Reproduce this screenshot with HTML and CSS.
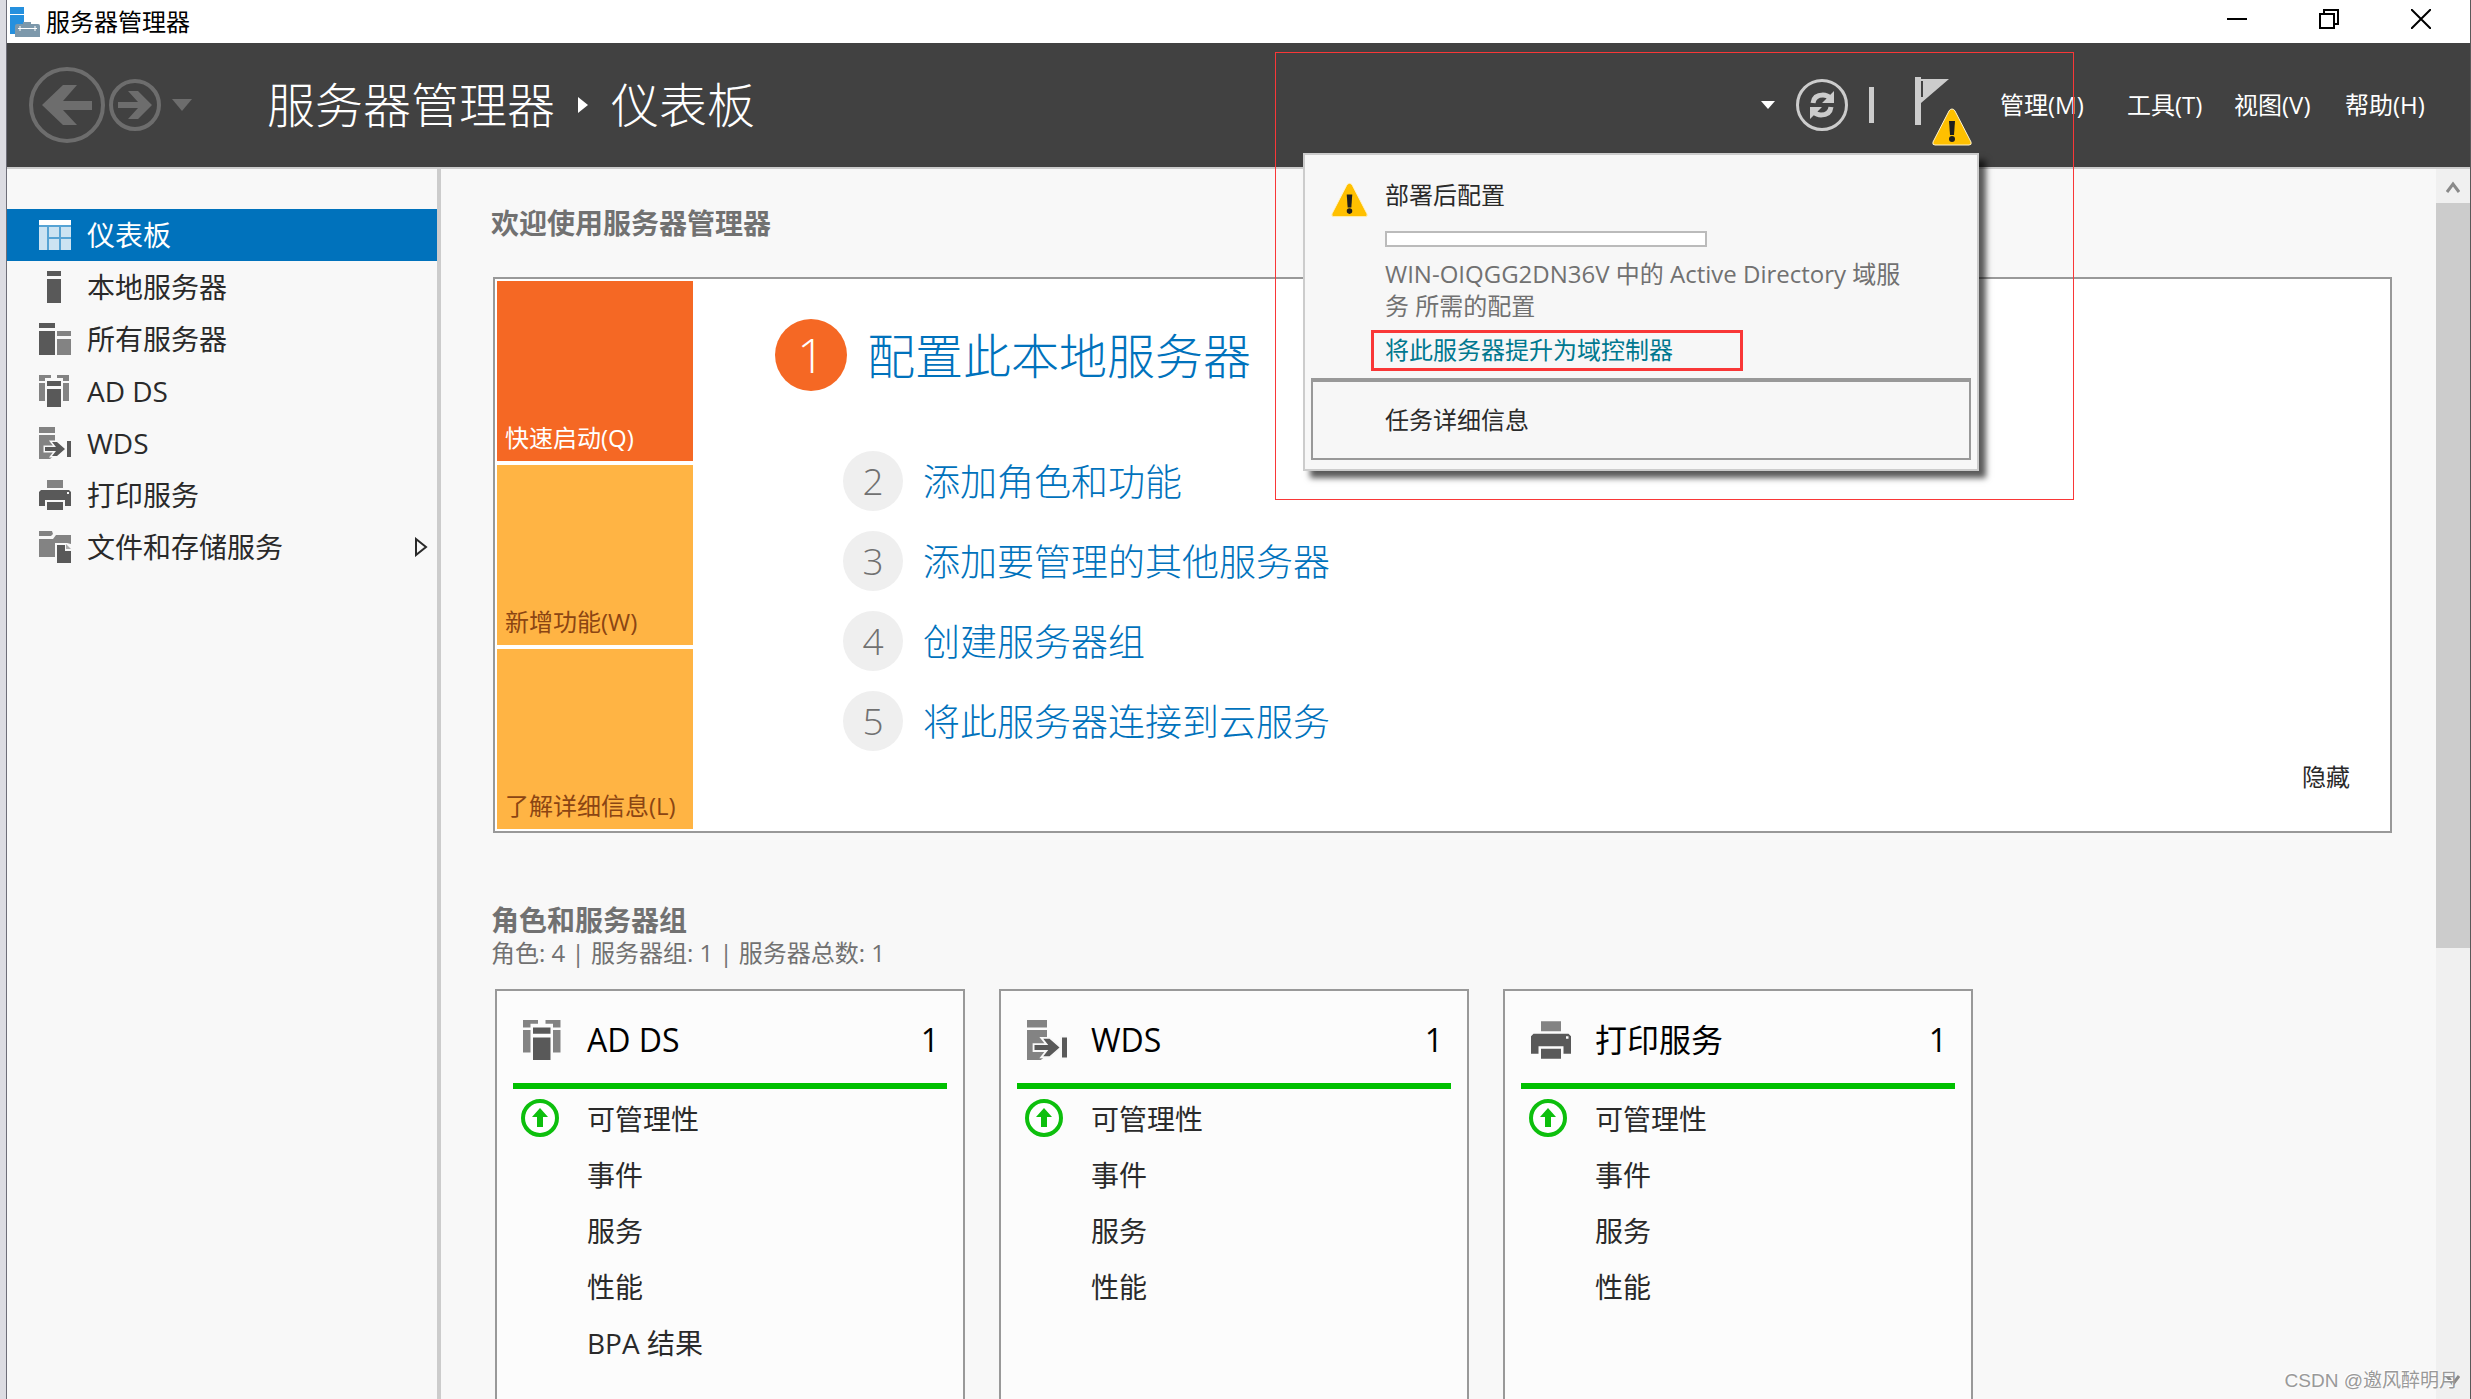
FILE: index.html
```html
<!DOCTYPE html>
<html lang="zh-CN">
<head>
<meta charset="utf-8">
<title>服务器管理器</title>
<link rel="stylesheet" href="styles.css">
</head>
<body>
<svg class="defs" aria-hidden="true">
  <symbol id="i-adds" viewBox="0 0 32 32">
    <path fill="#838383" d="M0 0h12v3H6v3H0zM18 0h12v6h-6V3h-6zM0 8h6v18H0zM24 8h6v18h-6z"/>
    <path fill="#595959" d="M8 6h14v5H8zM8 14h14v18H8z"/>
  </symbol>
  <symbol id="i-wds" viewBox="0 0 32 32">
    <path fill="#838383" d="M0 0h16v6H0zM0 8h16v20l-5 4H0z"/>
    <path fill="#595959" stroke="#f8f8f8" stroke-width="3" paint-order="stroke" d="M6 20h11l-4-5h5l8 7-8 7h-5l4-5H6zM28 14h5v16h-5z"/>
  </symbol>
  <symbol id="i-print" viewBox="0 0 32 32">
    <path fill="#838383" d="M8 1h16v8H8z"/>
    <path fill="#595959" fill-rule="evenodd" d="M2 11h28l2 2v14h-6v-6H6v6H0V13zM28 13h2v2h-2z"/>
    <path fill="#595959" d="M8 23h16v8H8z"/>
  </symbol>
  <symbol id="i-warn" viewBox="0 0 40 38">
    <path fill="#ffc000" stroke="#fff3cc" stroke-width="1" d="M20 1q2 0 3 2l16 31q1 3-2 3H3q-3 0-2-3L17 3q1-2 3-2z"/>
    <path fill="#1e1e1e" d="M17 13h6l-1 14h-4z"/><circle cx="20" cy="31" r="3" fill="#1e1e1e"/>
  </symbol>
  <symbol id="i-up" viewBox="0 0 38 38">
    <circle cx="19" cy="19" r="17" fill="#fff" stroke="#0dbf0d" stroke-width="4"/>
    <path fill="#0dbf0d" d="M19 9l8 9h-5v10h-6V18h-5z"/>
  </symbol>
</svg>

<div class="window">
  <header class="titlebar">
    <svg class="app-icon" viewBox="0 0 30 30"><path fill="#2590de" d="M0 0h14v7H0zM0 8h14v11H5v8H0z"/><path fill="#7c98ab" d="M5 19q0-2 2-2h6v-2h8v2h7q2 0 2 2v11H5z"/><path stroke="#fff" fill="none" d="M8 21.5h19M10 19v5M25 19v5"/></svg>
    <h1 class="app-name">服务器管理器</h1>
    <div class="win-buttons">
      <button aria-label="最小化"><svg viewBox="0 0 20 20"><path d="M0 10h20"/></svg></button>
      <button aria-label="还原"><svg viewBox="0 0 20 20"><path d="M1 5h14v14H1zM5 5V1h14v14h-4"/></svg></button>
      <button aria-label="关闭"><svg viewBox="0 0 20 20"><path d="M0 0l20 20M20 0L0 20"/></svg></button>
    </div>
  </header>

  <div class="toolbar">
    <div class="history">
      <button aria-label="后退"><svg class="back" viewBox="0 0 76 76"><circle cx="38" cy="38" r="36" fill="none" stroke="#6d6d6d" stroke-width="4"/><path fill="#6d6d6d" d="M13 38l21-20h14L34 34h29v9H34l14 15H34z"/></svg></button>
      <button aria-label="前进"><svg class="forward" viewBox="0 0 52 52"><circle cx="26" cy="26" r="24" fill="none" stroke="#6d6d6d" stroke-width="4"/><path fill="#6d6d6d" d="M43 26L29 40H19l10-11H9v-6h20L19 12h10z"/></svg></button>
      <button aria-label="历史记录"><svg class="drop" viewBox="0 0 20 12"><path fill="#6d6d6d" d="M0 0h20L10 12z"/></svg></button>
    </div>
    <nav class="crumbs"><span>服务器管理器</span><svg viewBox="0 0 10 16"><path fill="#fff" d="M0 0l10 8-10 8z"/></svg><span>仪表板</span></nav>
    <div class="actions">
      <button aria-label="更多"><svg class="caret" viewBox="0 0 14 8"><path fill="#fff" d="M0 0h14L7 8z"/></svg></button>
      <button class="refresh" aria-label="刷新"><svg viewBox="0 0 52 52"><circle cx="26" cy="26" r="24.500" fill="none" stroke="#ccc" stroke-width="3"/><path fill="none" stroke="#ccc" stroke-width="5" d="M17 24q1-8 10-8 4 0 7 3M35 28q-1 8-10 8-4 0-7-3"/><path fill="#ccc" d="M38 12v12H26zM14 40V28h12z"/></svg></button>
      <span class="divider"></span>
      <button class="notify" aria-label="通知"><svg class="flag" viewBox="0 0 34 48"><path fill="#ccc" d="M0 0h6v48H0zM6 2h28L6 26z"/><path stroke="#414141" stroke-width="2" d="M7 4v16" /></svg><svg class="badge"><use href="#i-warn"/></svg></button>
    </div>
    <nav class="menus"><button>管理(M)</button><button>工具(T)</button><button>视图(V)</button><button>帮助(H)</button></nav>
  </div>

  <div class="body">
    <nav class="sidebar">
      <a class="item active" href="#"><svg viewBox="0 0 32 32"><path fill="#fff" d="M0 1h32v5H0z"/><path fill="#56a3d4" d="M0 6h32v25H0z"/><path fill="#cce3f2" d="M0 8h8v23H0zM10 8h10v10H10zM22 8h10v10H22zM10 20h10v11H10zM22 20h10v11H22z"/></svg>仪表板</a>
      <a class="item" href="#"><svg viewBox="0 0 32 32"><path fill="#595959" d="M8 0h14v5H8zM8 8h14v24H8z"/></svg>本地服务器</a>
      <a class="item" href="#"><svg viewBox="0 0 32 32"><path fill="#595959" d="M0 0h16v5H0zM0 8h16v24H0z"/><path fill="#838383" d="M18 8h14v5H18zM18 16h14v16H18z"/></svg>所有服务器</a>
      <a class="item" href="#"><svg><use href="#i-adds"/></svg>AD DS</a>
      <a class="item" href="#"><svg><use href="#i-wds"/></svg>WDS</a>
      <a class="item" href="#"><svg><use href="#i-print"/></svg>打印服务</a>
      <a class="item" href="#"><svg viewBox="0 0 32 32"><path fill="#838383" d="M0 0h13l1 3-2 2H0zM0 8h14l3-4h15v9l-4-1H16v14H0z"/><path fill="#595959" d="M18 14h8v6h6v12H18z"/><path fill="#aaa" d="M27 13l5 5h-5z"/></svg>文件和存储服务<svg class="expand" viewBox="0 0 13 20"><path fill="none" stroke="#2a2a2a" stroke-width="2" d="M1 2l10 8-10 8z"/></svg></a>
    </nav>

    <main class="content">
      <h2 class="heading">欢迎使用服务器管理器</h2>
      <section class="welcome">
        <div class="tiles">
          <button class="tile current">快速启动(Q)</button>
          <button class="tile">新增功能(W)</button>
          <button class="tile">了解详细信息(L)</button>
        </div>
        <ol class="steps">
          <li class="first"><span class="num">1</span><a href="#">配置此本地服务器</a></li>
          <li><span class="num">2</span><a href="#">添加角色和功能</a></li>
          <li><span class="num">3</span><a href="#">添加要管理的其他服务器</a></li>
          <li><span class="num">4</span><a href="#">创建服务器组</a></li>
          <li><span class="num">5</span><a href="#">将此服务器连接到云服务</a></li>
        </ol>
        <button class="hide">隐藏</button>
      </section>
      <h2 class="heading">角色和服务器组</h2>
      <p class="summary">角色: 4 | 服务器组: 1 | 服务器总数: 1</p>
      <div class="cards">
        <article class="card">
          <h3><svg><use href="#i-adds"/></svg>AD DS<span class="count">1</span></h3>
          <ul><li><svg><use href="#i-up"/></svg>可管理性</li><li>事件</li><li>服务</li><li>性能</li><li>BPA 结果</li></ul>
        </article>
        <article class="card">
          <h3><svg><use href="#i-wds"/></svg>WDS<span class="count">1</span></h3>
          <ul><li><svg><use href="#i-up"/></svg>可管理性</li><li>事件</li><li>服务</li><li>性能</li></ul>
        </article>
        <article class="card">
          <h3><svg><use href="#i-print"/></svg>打印服务<span class="count">1</span></h3>
          <ul><li><svg><use href="#i-up"/></svg>可管理性</li><li>事件</li><li>服务</li><li>性能</li></ul>
        </article>
      </div>
    </main>

    <div class="scrollbar">
      <svg viewBox="0 0 14 12"><path d="M1 11l6-8 6 8"/></svg>
      <div class="thumb"></div>
      <svg class="down" viewBox="0 0 14 12"><path d="M1 1l6 8 6-8"/></svg>
    </div>
  </div>

  <aside class="popup">
    <div class="task">
      <svg class="task-icon"><use href="#i-warn"/></svg>
      <div class="task-text">
        <h3>部署后配置</h3>
        <div class="progress" role="progressbar" aria-label="进度"></div>
        <p>WIN-OIQGG2DN36V 中的 Active Directory 域服务 所需的配置</p>
        <a class="promote" href="#">将此服务器提升为域控制器</a>
      </div>
    </div>
    <button class="details">任务详细信息</button>
  </aside>
  <div class="marker"></div>
  <div class="watermark">CSDN @邀风醉明月</div>
</div>
</body>
</html>
```
FILE: styles.css
```css
* { box-sizing: border-box; }
html { background: #dcdce2; }
body {
  margin: 0;
  font: 24px/32px "Open Sans", "Noto Sans CJK SC", sans-serif;
  color: #2a2a2a;
}
button { border: 0; padding: 0; background: none; font: inherit; color: inherit; }
a { color: inherit; text-decoration: none; }
h1, h2, h3, p, ul, ol { margin: 0; padding: 0; font-size: inherit; font-weight: 400; }
ul, ol { list-style: none; }
svg { display: block; flex: none; }
.defs { position: absolute; width: 0; height: 0; }

.window {
  position: relative;
  display: flex;
  flex-direction: column;
  height: 100vh;
  margin-left: 6px;
  overflow: hidden;
  border-left: 1px solid #6e6e78;
  border-right: 1px solid #5a5a5a;
  background: #f8f8f8;
}

.titlebar { display: flex; align-items: center; height: 43px; padding: 0 39px 0 3px; background: #fff; color: #000; }
.app-icon { width: 30px; height: 30px; margin-right: 6px; }
.app-name { font-size: 24px; }
.win-buttons { display: flex; gap: 72px; margin-left: auto; padding-bottom: 5px; }
.win-buttons svg { width: 20px; height: 20px; fill: none; stroke: #000; stroke-width: 2; }

.toolbar {
  display: flex;
  align-items: center;
  height: 126px;
  padding: 0 42px 0 22px;
  background: #414141;
  border-bottom: 2px solid #ccc;
  color: #fff;
}
.history { display: flex; align-items: center; gap: 4px; }
.back { width: 76px; height: 76px; }
.forward { width: 52px; height: 52px; }
.drop { width: 20px; height: 12px; margin-left: 7px; }
.crumbs { display: flex; align-items: center; gap: 23px; margin-left: 75px; font-size: 48px; line-height: 64px; font-weight: 300; }
.crumbs svg { width: 10px; height: 16px; }
.actions { display: flex; align-items: center; gap: 21px; margin-left: auto; }
.caret { width: 14px; height: 8px; }
.refresh svg { width: 52px; height: 52px; }
.divider { width: 5px; height: 36px; background: #ccc; }
.notify { position: relative; margin-left: 20px; padding-bottom: 8px; }
.flag { width: 34px; height: 48px; }
.badge { position: absolute; left: 17px; top: 31px; width: 40px; height: 38px; }
.menus { display: grid; grid-template-columns: 127px 107px 111px 83px; margin-left: 51px; }
.menus button { text-align: left; white-space: nowrap; }

.body { display: flex; flex: 1; min-height: 0; }
.sidebar { flex: none; width: 434px; padding-top: 40px; border-right: 4px solid #ccc; }
.item { display: flex; align-items: center; gap: 16px; height: 52px; padding: 0 9px 0 32px; font-size: 28px; }
.item svg { width: 32px; height: 32px; }
.item .expand { width: 13px; height: 20px; margin-left: auto; }
.active { background: #0072bc; color: #fff; }

.content { flex: 1; min-width: 0; padding: 36px 44px 0 50px; overflow: hidden; }
.heading { font-size: 28px; line-height: 36px; font-weight: 700; color: #717171; }
.welcome {
  display: flex;
  margin: 36px 0 69px 2px;
  padding: 2px;
  border: 2px solid #999;
  background: #fff;
}
.tiles { display: grid; gap: 4px; width: 196px; }
.tile { display: flex; align-items: flex-end; height: 180px; padding: 0 8px 7px; background: #ffb444; color: #8b4513; white-space: nowrap; }
.current { background: #f56824; color: #fff; }
.steps { display: flex; flex-direction: column; gap: 20px; padding: 38px 0 0 150px; font-size: 37px; line-height: 48px; color: #0072bc; font-weight: 300; }
.steps li { display: flex; align-items: center; gap: 20px; }
.steps a { padding-top: 2px; }
.steps li.first { margin: 0 0 40px -68px; font-size: 48px; line-height: 64px; }
.num { display: grid; place-items: center; width: 60px; height: 60px; border-radius: 50%; background: #efefef; color: #717171; }
.first .num { width: 72px; height: 72px; background: #f56824; color: #fff; }
.hide { align-self: flex-end; margin: 0 38px 36px auto; }

.summary { line-height: 30px; color: #717171; }
.cards { display: flex; gap: 34px; padding: 21px 0 0 4px; }
.card { flex: none; width: 470px; height: 480px; padding: 0 16px; border: 2px solid #999; background: #fcfcfc; }
.card h3 { display: flex; align-items: center; gap: 24px; height: 98px; padding: 5px 8px 0 10px; border-bottom: 6px solid #00c000; font-size: 32px; line-height: 44px; color: #000; }
.card h3 svg { width: 40px; height: 40px; }
.count { margin-left: auto; }
.card ul { padding-top: 2px; font-size: 28px; }
.card li { position: relative; display: flex; align-items: center; height: 56px; padding-left: 74px; }
.card li svg { position: absolute; left: 8px; top: 8px; width: 38px; height: 38px; }

.scrollbar { flex: none; display: flex; flex-direction: column; align-items: center; width: 34px; background: #f0f0f0; }
.scrollbar svg { width: 14px; height: 12px; margin: 12px 0 10px; fill: none; stroke: #8a8a8a; stroke-width: 3; }
.thumb { flex: none; width: 34px; height: calc(61% - 5px); background: #ccc; }
.scrollbar .down { margin-top: auto; margin-bottom: 12px; }

.popup {
  position: absolute;
  top: 153px;
  right: 491px;
  width: 676px;
  padding: 24px 6px 9px;
  border: 2px solid #ccc;
  background: #f7f7f7;
  box-shadow: 7px 7px 6px rgba(0, 0, 0, .65);
}
.task { display: flex; gap: 17px; padding: 0 40px 7px 20px; }
.task-icon { width: 37px; height: 36px; margin-top: 3px; }
.progress { width: 322px; height: 16px; margin: 20px 0 11px; border: 2px solid #bbb; background: #fff; }
.task-text { flex: 1; min-width: 0; }
.task-text p { max-width: 530px; color: #717171; }
.promote { display: block; width: 372px; margin: 8px 0 0 -14px; padding: 1px 11px 2px; border: 3px solid #f93737; color: #00788f; }
.details { display: block; width: 100%; height: 82px; padding-left: 72px; border: 2px solid #999; border-top-width: 4px; text-align: left; }
.marker { position: absolute; top: 52px; right: 396px; width: 799px; height: 448px; border: 1px solid #f93737; pointer-events: none; }
.watermark { position: absolute; right: 12px; bottom: 4px; font: 19px/28px "Liberation Sans", "Noto Sans CJK SC", sans-serif; color: #999; text-shadow: -1px -1px 0 #fff; }
```
